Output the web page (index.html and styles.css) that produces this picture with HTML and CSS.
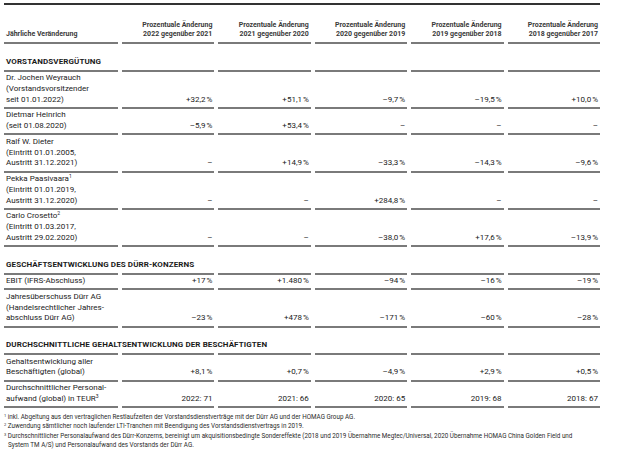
FILE: index.html
```html
<!DOCTYPE html>
<html lang="de">
<head>
<meta charset="utf-8">
<title>Jährliche Veränderung</title>
<link rel="stylesheet" href="styles.css">
</head>
<body>
<div class="page">
  <div class="table">
    <div class="row head">
      <div class="cell label">Jährliche Veränderung</div>
      <div class="cell num">Prozentuale Änderung<br>2022 gegenüber 2021</div>
      <div class="cell num">Prozentuale Änderung<br>2021 gegenüber 2020</div>
      <div class="cell num">Prozentuale Änderung<br>2020 gegenüber 2019</div>
      <div class="cell num">Prozentuale Änderung<br>2019 gegenüber 2018</div>
      <div class="cell num">Prozentuale Änderung<br>2018 gegenüber 2017</div>
    </div>

    <div class="row section">
      <div class="cell label"><span class="title">VORSTANDSVERGÜTUNG</span></div>
      <div class="cell"></div><div class="cell"></div><div class="cell"></div><div class="cell"></div><div class="cell"></div>
    </div>
    <div class="row">
      <div class="cell label">Dr. Jochen Weyrauch<br>(Vorstandsvorsitzender<br>seit 01.01.2022)</div>
      <div class="cell num">+32,2&#8239;%</div>
      <div class="cell num">+51,1&#8239;%</div>
      <div class="cell num">–9,7&#8239;%</div>
      <div class="cell num">–19,5&#8239;%</div>
      <div class="cell num">+10,0&#8239;%</div>
    </div>
    <div class="row">
      <div class="cell label">Dietmar Heinrich<br>(seit 01.08.2020)</div>
      <div class="cell num">–5,9&#8239;%</div>
      <div class="cell num">+53,4&#8239;%</div>
      <div class="cell num">–</div>
      <div class="cell num">–</div>
      <div class="cell num">–</div>
    </div>
    <div class="row">
      <div class="cell label">Ralf W. Dieter<br>(Eintritt 01.01.2005,<br>Austritt 31.12.2021)</div>
      <div class="cell num">–</div>
      <div class="cell num">+14,9&#8239;%</div>
      <div class="cell num">–33,3&#8239;%</div>
      <div class="cell num">–14,3&#8239;%</div>
      <div class="cell num">–9,6&#8239;%</div>
    </div>
    <div class="row">
      <div class="cell label">Pekka Paasivaara<sup>1</sup><br>(Eintritt 01.01.2019,<br>Austritt 31.12.2020)</div>
      <div class="cell num">–</div>
      <div class="cell num">–</div>
      <div class="cell num">+284,8&#8239;%</div>
      <div class="cell num">–</div>
      <div class="cell num">–</div>
    </div>
    <div class="row">
      <div class="cell label">Carlo Crosetto<sup>2</sup><br>(Eintritt 01.03.2017,<br>Austritt 29.02.2020)</div>
      <div class="cell num">–</div>
      <div class="cell num">–</div>
      <div class="cell num">–38,0&#8239;%</div>
      <div class="cell num">+17,6&#8239;%</div>
      <div class="cell num">–13,9&#8239;%</div>
    </div>

    <div class="row section">
      <div class="cell label"><span class="title">GESCHÄFTSENTWICKLUNG DES DÜRR-KONZERNS</span></div>
      <div class="cell"></div><div class="cell"></div><div class="cell"></div><div class="cell"></div><div class="cell"></div>
    </div>
    <div class="row">
      <div class="cell label">EBIT (IFRS-Abschluss)</div>
      <div class="cell num">+17&#8239;%</div>
      <div class="cell num">+1.480&#8239;%</div>
      <div class="cell num">–94&#8239;%</div>
      <div class="cell num">–16&#8239;%</div>
      <div class="cell num">–19&#8239;%</div>
    </div>
    <div class="row">
      <div class="cell label">Jahresüberschuss Dürr AG<br>(Handelsrechtlicher Jahres-<br>abschluss Dürr AG)</div>
      <div class="cell num">–23&#8239;%</div>
      <div class="cell num">+478&#8239;%</div>
      <div class="cell num">–171&#8239;%</div>
      <div class="cell num">–60&#8239;%</div>
      <div class="cell num">–28&#8239;%</div>
    </div>

    <div class="row section">
      <div class="cell label"><span class="title">DURCHSCHNITTLICHE GEHALTSENTWICKLUNG DER BESCHÄFTIGTEN</span></div>
      <div class="cell"></div><div class="cell"></div><div class="cell"></div><div class="cell"></div><div class="cell"></div>
    </div>
    <div class="row">
      <div class="cell label">Gehaltsentwicklung aller<br>Beschäftigten (global)</div>
      <div class="cell num">+8,1&#8239;%</div>
      <div class="cell num">+0,7&#8239;%</div>
      <div class="cell num">–4,9&#8239;%</div>
      <div class="cell num">+2,9&#8239;%</div>
      <div class="cell num">+0,5&#8239;%</div>
    </div>
    <div class="row">
      <div class="cell label">Durchschnittlicher Personal-<br>aufwand (global) in TEUR<sup>3</sup></div>
      <div class="cell num">2022: 71</div>
      <div class="cell num">2021: 66</div>
      <div class="cell num">2020: 65</div>
      <div class="cell num">2019: 68</div>
      <div class="cell num">2018: 67</div>
    </div>
  </div>

  <div class="notes">
    <p><sup>1</sup> inkl. Abgeltung aus den vertraglichen Restlaufzeiten der Vorstandsdienstverträge mit der Dürr AG und der HOMAG Group AG.</p>
    <p><sup>2</sup> Zuwendung sämtlicher noch laufender LTI-Tranchen mit Beendigung des Vorstandsdienstvertrags in 2019.</p>
    <p><sup>3</sup> Durchschnittlicher Personalaufwand des Dürr-Konzerns, bereinigt um akquisitionsbedingte Sondereffekte (2018 und 2019 Übernahme Megtec/Universal, 2020 Übernahme HOMAG China Golden Field und<br>System TM A/S) und Personalaufwand des Vorstands der Dürr AG.</p>
  </div>
</div>
</body>
</html>
```

FILE: styles.css
```css
* { box-sizing: border-box; }

html, body {
  margin: 0;
  padding: 0;
  background: #ffffff;
}

body {
  font-family: Roboto, "Liberation Sans", sans-serif;
  color: #222222;
}

.page {
  padding: 3px 19px 0 4px;
}

.table {
  border-top: 2px solid #333333;
}

.row {
  display: grid;
  grid-template-columns: 114px repeat(5, 1fr);
  column-gap: 4px;
}

.cell {
  font-size: 8px;
  line-height: 10.75px;
  font-weight: 400;
  padding: 1.5px 2px 1.5px 2px;
  border-bottom: 2px solid #7a7a7a;
  white-space: nowrap;
}

.cell.num {
  text-align: right;
  display: flex;
  align-items: flex-end;
  justify-content: flex-end;
}

.head .cell {
  font-size: 7px;
  line-height: 9px;
  font-weight: 700;
  color: #3a3a3a;
  padding-top: 15.5px;
  padding-bottom: 3.5px;
  display: flex;
  align-items: flex-end;
}

.head .cell.num {
  justify-content: flex-end;
  text-align: right;
}

.section .cell {
  padding-top: 12.7px;
  padding-bottom: 1.7px;
  height: 27.5px;
}

.title {
  font-weight: 700;
  font-size: 8px;
  letter-spacing: 0.1px;
  color: #1a1a1a;
}

sup {
  font-size: 5px;
  line-height: 0;
  vertical-align: 3px;
}

.notes {
  margin-top: 4.5px;
}

.notes p {
  margin: 0;
  font-size: 6.3px;
  line-height: 9.5px;
  padding-left: 4px;
  text-indent: -4px;
  white-space: nowrap;
  color: #2a2a2a;
}

.notes sup {
  font-size: 4px;
  vertical-align: 2px;
}
```
